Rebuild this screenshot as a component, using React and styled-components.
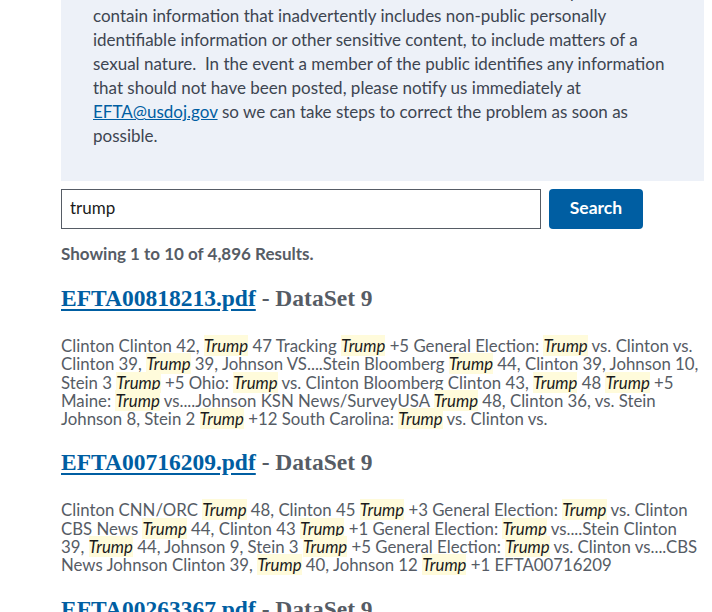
import React from 'react';
import styled, { createGlobalStyle } from 'styled-components';

const GlobalStyle = createGlobalStyle`
  html, body {
    margin: 0;
    padding: 0;
    background: #ffffff;
    overflow: hidden;
  }
  body {
    font-family: "Lato", "Liberation Sans", Arial, sans-serif;
    color: #1b1b1b;
  }
`;

const Page = styled.div`
  width: 643px;
  margin: -24px 0 0 61px;
`;

const Notice = styled.div`
  background: #edf1f8;
  padding: 4px 32px 33px 32px;
  font-size: 17px;
  line-height: 24px;
  color: #3d4551;
`;

const NoticeText = styled.p`
  margin: 0;
`;

const Link = styled.a`
  color: #005ea2;
  text-decoration: underline;
`;

const SearchRow = styled.form`
  display: flex;
  gap: 8px;
  margin-top: 8px;
`;

const SearchInput = styled.input`
  box-sizing: border-box;
  width: 480px;
  height: 40px;
  border: 1px solid #565c65;
  border-radius: 0;
  padding: 0 8px 3px;
  font-family: "Lato", "Liberation Sans", Arial, sans-serif;
  font-size: 17px;
  color: #1b1b1b;
  outline: none;
`;

const SearchButton = styled.button`
  box-sizing: border-box;
  width: 94px;
  height: 40px;
  border: 0;
  border-radius: 4px;
  padding: 0 0 4px;
  background: #005ea2;
  color: #ffffff;
  font-family: "Lato", "Liberation Sans", Arial, sans-serif;
  font-weight: 700;
  font-size: 17.5px;
`;

const Summary = styled.div`
  margin-top: 14px;
  font-size: 17px;
  font-weight: 700;
  color: #565c65;
`;

const Result = styled.section`
  margin-top: 20px;
`;

const ResultTitle = styled.h2`
  margin: 0;
  font-family: "Liberation Serif", "DejaVu Serif", serif;
  font-weight: 700;
  font-size: 23.5px;
  line-height: 28px;
  color: #565c65;
`;

const FileLink = styled.a`
  color: #005ea2;
  text-decoration: underline;
  text-underline-offset: 3px;
`;

const Snippet = styled.p`
  margin: 25px 0 0;
  font-size: 16.8px;
  line-height: 18.3px;
  color: #565c65;
`;

const Hit = styled.em`
  font-style: italic;
  color: #1b1b1b;
  background: #fffbdb;
`;

const results = [
  {
    file: 'EFTA00818213.pdf',
    set: 'DataSet 9',
    parts: [
      'Clinton Clinton 42, ', 1, ' 47 Tracking ', 1, ' +5 General Election: ', 1,
      ' vs. Clinton vs. Clinton 39, ', 1, ' 39, Johnson VS....Stein Bloomberg ', 1,
      ' 44, Clinton 39, Johnson 10, Stein 3 ', 1, ' +5 Ohio: ', 1,
      ' vs. Clinton Bloomberg Clinton 43, ', 1, ' 48 ', 1, ' +5 Maine: ', 1,
      ' vs....Johnson KSN News/SurveyUSA ', 1, ' 48, Clinton 36, vs. Stein Johnson 8, Stein 2 ', 1,
      ' +12 South Carolina: ', 1, ' vs. Clinton vs.',
    ],
  },
  {
    file: 'EFTA00716209.pdf',
    set: 'DataSet 9',
    parts: [
      'Clinton CNN/ORC ', 1, ' 48, Clinton 45 ', 1, ' +3 General Election: ', 1,
      ' vs. Clinton CBS News ', 1, ' 44, Clinton 43 ', 1, ' +1 General Election: ', 1,
      ' vs....Stein Clinton 39, ', 1, ' 44, Johnson 9, Stein 3 ', 1, ' +5 General Election: ', 1,
      ' vs. Clinton vs....CBS News Johnson Clinton 39, ', 1, ' 40, Johnson 12 ', 1, ' +1 EFTA00716209',
    ],
  },
  {
    file: 'EFTA00263367.pdf',
    set: 'DataSet 9',
    parts: ['Clinton ', 1, ' 44, Clinton 39'],
  },
];

const App = () => (
  <>
    <GlobalStyle />
    <Page>
      <Notice>
        <NoticeText>
          Even with the care taken to redact material the released files may
          <br />
          contain information that inadvertently includes non-public personally
          identifiable information or other sensitive content, to include matters of a
          sexual nature.&nbsp; In the event a member of the public identifies any information
          that should not have been posted, please notify us immediately at{' '}
          <Link href="#">EFTA@usdoj.gov</Link> so we can take steps to correct the problem as soon as
          possible.
        </NoticeText>
      </Notice>

      <SearchRow onSubmit={(e) => e.preventDefault()}>
        <SearchInput defaultValue="trump" />
        <SearchButton type="submit">Search</SearchButton>
      </SearchRow>

      <Summary>Showing 1 to 10 of 4,896 Results.</Summary>

      {results.map((r) => (
        <Result key={r.file}>
          <ResultTitle>
            <FileLink href="#">{r.file}</FileLink> - {r.set}
          </ResultTitle>
          <Snippet>
            {r.parts.map((p, i) => (p === 1 ? <Hit key={i}>Trump</Hit> : p))}
          </Snippet>
        </Result>
      ))}
    </Page>
  </>
);

export default App;
